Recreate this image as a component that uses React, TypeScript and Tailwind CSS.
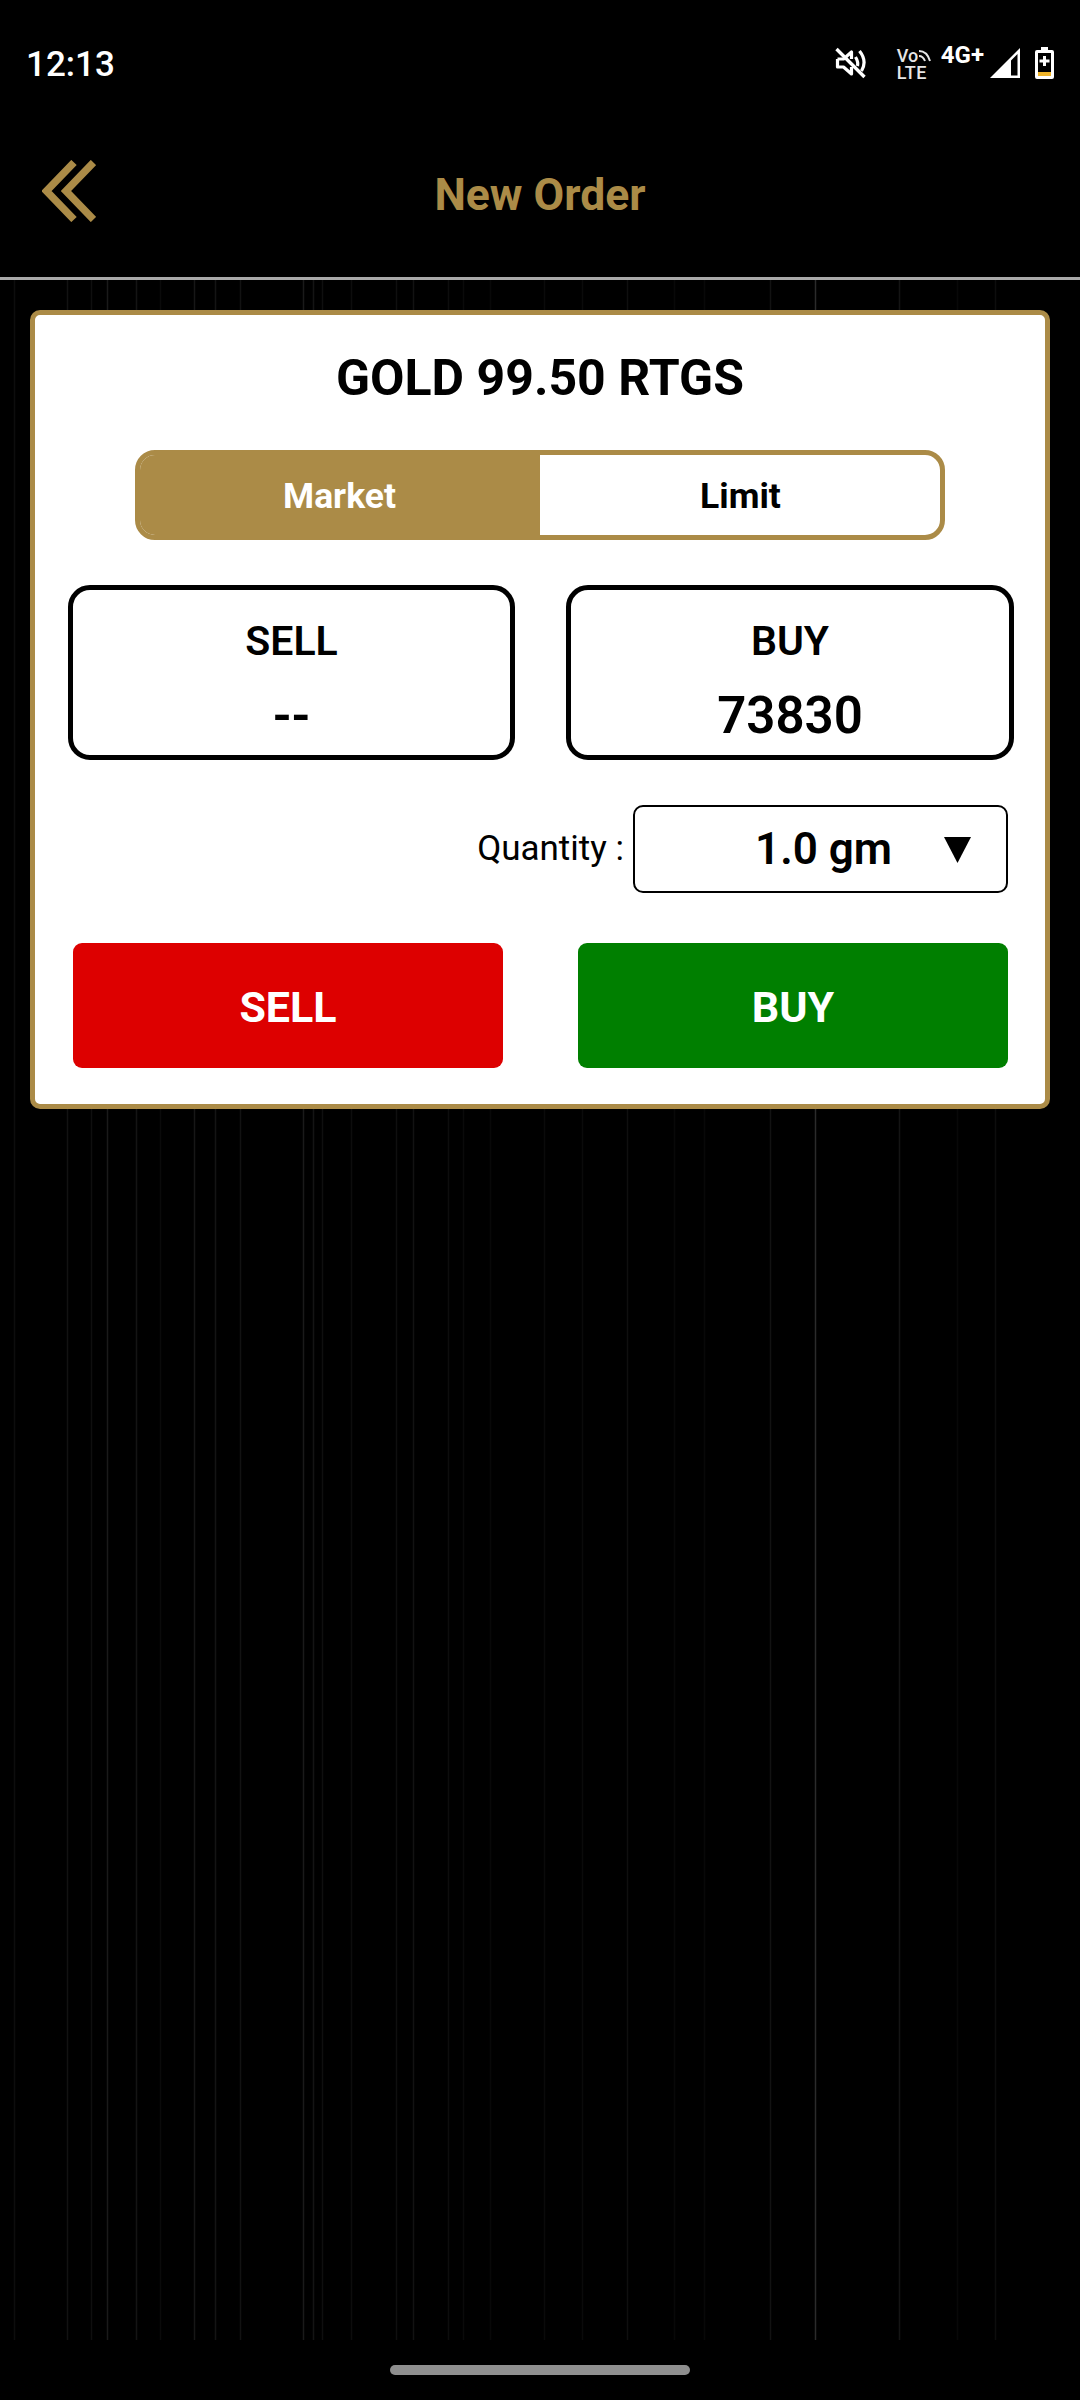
const lineXs = [
  [14, 0.05], [67, 0.07], [91, 0.06], [107, 0.1], [136, 0.08], [160, 0.04], [194, 0.09], [215, 0.08], [240, 0.07], [303, 0.1], [313, 0.08], [322, 0.06], [351, 0.05], [396, 0.06], [413, 0.07], [448, 0.05], [463, 0.04], [490, 0.03], [544, 0.04], [582, 0.04], [627, 0.06], [674, 0.03], [704, 0.03], [770, 0.07], [815, 0.17], [899, 0.08], [957, 0.03], [995, 0.05],
];

function Lines() {
  return (
    <svg className="absolute left-0 top-[280px]" width="1080" height="2060" aria-hidden="true">
      {lineXs.map(([x, o]) => (
        <line key={x} x1={x + 0.5} y1="0" x2={x + 0.5} y2="2060" stroke="#ffffff" strokeOpacity={o} strokeWidth="1.5" />
      ))}
    </svg>
  );
}

function MuteIcon() {
  return (
    <svg width="33" height="32" viewBox="0 0 32 32" fill="none" stroke="#fff" strokeWidth="3.2">
      <path d="M2 2 L30 30" strokeWidth="3.4" />
      <path d="M3 12 H9 L17 5 V12 M17 20 V27 L9 20 H3 V12" strokeLinejoin="round" />
      <path d="M21 10 Q24 15 23 19" />
      <path d="M25 4 Q33 14 27 24" />
    </svg>
  );
}

function StatusIcons() {
  return (
    <div className="flex items-start">
      <MuteIcon />
      <div className="ml-[30px] flex w-[36px] flex-col text-[18px] font-medium leading-[17px] text-[#e6e6e6]">
        <div className="flex items-center">
          <span>Vo</span>
          <svg width="14" height="14" viewBox="0 0 14 14" fill="none" stroke="#e6e6e6" strokeWidth="2">
            <path d="M1 2 Q9 2 12 12" />
            <path d="M1 7 Q5 7 7 12" />
          </svg>
        </div>
        <span className="tracking-[0.5px]">LTE</span>
      </div>
      <span className="ml-[8px] mt-[-4px] text-[24px] font-bold leading-[24px] text-white">4G+</span>
      <svg className="ml-[5px]" width="32" height="32" viewBox="0 0 32 32">
        <path d="M1 31 L31 1 V31 Z M22 28.5 H28.5 V7 L22 13.5 Z" fill="#fff" fillRule="evenodd" />
      </svg>
      <svg className="ml-[14px]" width="19" height="32" viewBox="0 0 19 32">
        <path d="M6 0 H13 V3 H17 Q19 3 19 5 V30 Q19 32 17 32 H2 Q0 32 0 30 V5 Q0 3 2 3 H6 Z" fill="#fff" />
        <rect x="3" y="6" width="13" height="16" fill="#000" />
        <rect x="3" y="22" width="13" height="3" fill="#000" />
        <rect x="3" y="25" width="13" height="4" fill="#f0b429" />
        <path d="M8 9 H11 V12.5 H14.5 V15.5 H11 V19 H8 V15.5 H4.5 V12.5 H8 Z" fill="#fff" />
      </svg>
    </div>
  );
}

function PriceBox({ label, value, wide }: { label: string; value: string; wide?: boolean }) {
  return (
    <div className={`flex h-[175px] flex-col items-center rounded-[22px] border-[5px] border-black bg-white pt-[28px] ${wide ? "w-[448px]" : "w-[447px]"}`}>
      <span className="text-[41px] font-semibold leading-[46px] text-black">{label}</span>
      <span className="mt-[24px] text-[51px] font-semibold leading-[56px] text-black">{value}</span>
    </div>
  );
}

export default function App() {
  return (
    <div className="relative h-[2400px] w-[1080px] overflow-hidden bg-black font-['Roboto',sans-serif]">
      <Lines />
      <div className="relative flex flex-col">
        <div className="flex h-[124px] items-start justify-between pl-[26px] pr-[26px] pt-[47px]">
          <span className="mt-[-4px] text-[35px] font-medium leading-[44px] text-white">12:13</span>
          <StatusIcons />
        </div>
        <div className="relative flex h-[156px] items-center justify-center border-b-[3px] border-[#a9a9a9] pb-[12px]">
          <span className="text-[44.5px] font-bold leading-[52px] text-[#ab8b47]">New Order</span>
          <svg className="absolute left-[42px] top-[36px]" width="54" height="62" viewBox="0 0 54 62" fill="none" stroke="#ab8b47" strokeWidth="7.5">
            <path d="M32 2.5 L4.5 31 L32 59.5" />
            <path d="M51.5 2.5 L24 31 L51.5 59.5" />
          </svg>
        </div>
        <div className="mx-[30px] mt-[30px] flex h-[799px] flex-col rounded-[10px] border-[5px] border-[#ab8b47] bg-white">
          <div className="flex h-[126px] items-center justify-center text-[50px] font-bold leading-[56px] text-black">
            GOLD 99.50 RTGS
          </div>
          <div className="mx-[100px] mt-[9px] flex h-[90px] overflow-hidden rounded-[20px] border-[5px] border-[#ab8b47]">
            <div className="flex w-[400px] items-center justify-center bg-[#ab8b47] pr-[1px] pt-[4px] text-[35.5px] font-bold text-white">Market</div>
            <div className="flex flex-1 items-center justify-center pl-[1px] pt-[4px] text-[35.5px] font-bold text-black">Limit</div>
          </div>
          <div className="mt-[45px] flex justify-between pl-[33px] pr-[31px]">
            <PriceBox label="SELL" value="--" />
            <PriceBox label="BUY" value="73830" wide />
          </div>
          <div className="mt-[45px] flex items-center justify-end pr-[37px]">
            <span className="mr-[9px] text-[35px] leading-[42px] text-black">Quantity :</span>
            <div className="flex h-[88px] w-[375px] items-center rounded-[10px] border-[2.5px] border-black pl-[120px]">
              <span className="text-[44px] font-semibold leading-[52px] text-black">1.0 gm</span>
              <svg className="ml-[52px]" width="27" height="27" viewBox="0 0 27 27">
                <path d="M0 1 H27 L13.5 27 Z" fill="#000" />
              </svg>
            </div>
          </div>
          <div className="mt-[50px] flex justify-between pl-[38px] pr-[37px]">
            <div className="flex h-[125px] w-[430px] items-center justify-center rounded-[9px] bg-[#dd0000] pt-[3px] text-[43px] font-bold text-white">SELL</div>
            <div className="flex h-[125px] w-[430px] items-center justify-center rounded-[9px] bg-[#007f00] pt-[3px] text-[43px] font-bold text-white">BUY</div>
          </div>
        </div>
      </div>
      <div className="absolute bottom-[25px] left-[390px] h-[10px] w-[300px] rounded-[5px] bg-[#8f8f8f]" />
    </div>
  );
}
